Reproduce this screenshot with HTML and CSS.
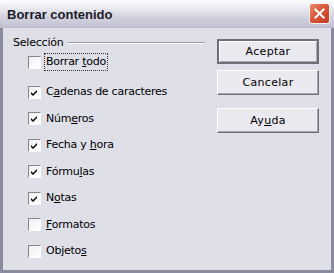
FILE: index.html
```html
<!DOCTYPE html>
<html lang="es">
<head>
    <meta charset="UTF-8">
    <title>Borrar contenido</title>
    <link rel="stylesheet" href="styles.css">
</head>
<body>
    <div class="window">
        <div class="titlebar">
            <span class="title">Borrar contenido</span>
            <span class="close">
                <svg width="21" height="21" viewBox="0 0 21 21">
                    <path d="M6 6 L15 15 M15 6 L6 15" stroke="#fff" stroke-width="2.2" stroke-linecap="square"/>
                </svg>
            </span>
        </div>
        <div class="body">
            <div class="group">
                <div class="group-head">
                    <span>Selección</span>
                    <span class="rule"></span>
                </div>
                <div class="check first"><span class="box"></span><span class="label focus">Borrar <u>t</u>odo</span></div>
                <div class="check"><span class="box"><svg class="tick" viewBox="0 0 7 7"><path d="M0 3 L2 5 L6 1 L6 3 L2 7 L0 5 Z"/></svg></span><span class="label">C<u>a</u>denas de caracteres</span></div>
                <div class="check"><span class="box"><svg class="tick" viewBox="0 0 7 7"><path d="M0 3 L2 5 L6 1 L6 3 L2 7 L0 5 Z"/></svg></span><span class="label">Núm<u>e</u>ros</span></div>
                <div class="check"><span class="box"><svg class="tick" viewBox="0 0 7 7"><path d="M0 3 L2 5 L6 1 L6 3 L2 7 L0 5 Z"/></svg></span><span class="label">Fecha y <u>h</u>ora</span></div>
                <div class="check"><span class="box"><svg class="tick" viewBox="0 0 7 7"><path d="M0 3 L2 5 L6 1 L6 3 L2 7 L0 5 Z"/></svg></span><span class="label">Fórmu<u>l</u>as</span></div>
                <div class="check"><span class="box"><svg class="tick" viewBox="0 0 7 7"><path d="M0 3 L2 5 L6 1 L6 3 L2 7 L0 5 Z"/></svg></span><span class="label">N<u>o</u>tas</span></div>
                <div class="check"><span class="box"></span><span class="label"><u>F</u>ormatos</span></div>
                <div class="check"><span class="box"></span><span class="label">Objeto<u>s</u></span></div>
            </div>
            <div class="buttons">
                <button class="btn default">Aceptar</button>
                <button class="btn">Cancelar</button>
                <button class="btn help">Ay<u>u</u>da</button>
            </div>
        </div>
    </div>
</body>
</html>
```

FILE: styles.css
```css
body {
    margin: 0;
    font-family: "DejaVu Sans", sans-serif;
    font-size: 11px;
    color: #000;
}
.window {
    width: 334px;
    height: 273px;
    display: flex;
    flex-direction: column;
}
.titlebar {
    height: 27px;
    border-bottom: 1px solid #b8b8c8;
    background: linear-gradient(#fdfdfe 0%, #e6e6ee 35%, #cfcfdc 70%, #c2c2d2 100%);
    border-radius: 6px 6px 0 0;
    display: flex;
    align-items: center;
    justify-content: space-between;
    padding: 0 4px 0 7px;
}
.title {
    font-family: "Liberation Sans", sans-serif;
    font-weight: bold;
    font-size: 13px;
    color: #1c1c28;
    padding-top: 2px;
}
.close {
    width: 21px;
    height: 21px;
    border-radius: 3px;
    background: linear-gradient(135deg, #e88a70 0%, #d9573a 45%, #c13c22 100%);
    border: 1px solid #f0f0f0;
    box-sizing: border-box;
    display: flex;
    align-items: center;
    justify-content: center;
    margin-top: -1px;
}
.close svg {
    width: 19px;
    height: 19px;
}
.body {
    flex: 1;
    background: #dfdfe8;
    border: 3px solid #8b8ba0;
    border-top: none;
    display: flex;
    padding: 8px 12px 0 10px;
}
.group {
    width: 192px;
}
.group-head {
    display: flex;
    align-items: center;
    height: 13px;
    line-height: 13px;
    letter-spacing: -0.2px;
}
.rule {
    flex: 1;
    height: 1px;
    background: #9a9aaa;
    border-bottom: 1px solid #fff;
    margin-left: 4px;
}
.check {
    height: 26.5px;
    display: flex;
    align-items: center;
    padding-left: 15px;
}
.check.first {
    margin-bottom: 3.5px;
}
.box {
    width: 13px;
    height: 13px;
    box-sizing: border-box;
    border: 1px solid;
    border-color: #858591 #fff #fff #858591;
    background: linear-gradient(135deg, #f0f0f0, #fff);
    margin-right: 3px;
    display: flex;
    align-items: center;
    justify-content: center;
}
.tick {
    width: 7px;
    height: 7px;
    fill: #000;
}
.label {
    padding: 1px 1px 2px;
    line-height: 13px;
    letter-spacing: -0.25px;
    border: 1px solid transparent;
}
.label.focus {
    border: 1px dotted #333;
}
.buttons {
    margin-left: 12px;
    padding-top: 3px;
    display: flex;
    flex-direction: column;
    width: 102px;
}
.btn {
    height: 25px;
    font-family: "DejaVu Sans", sans-serif;
    font-size: 11px;
    letter-spacing: 0.3px;
    color: #000;
    background: #e9e9ef;
    border: 1px solid;
    border-color: #fff #6e6e78 #6e6e78 #fff;
    box-shadow: inset -1px -1px 0 #a8a8b4;
    padding: 0;
    margin-bottom: 6px;
}
.btn.default {
    border-width: 2px;
    border-color: #6e6e78;
    box-shadow: inset 1px 1px 0 #fff, inset -1px -1px 0 #a8a8b4;
}
.btn.help {
    margin-top: 7px;
}
```
